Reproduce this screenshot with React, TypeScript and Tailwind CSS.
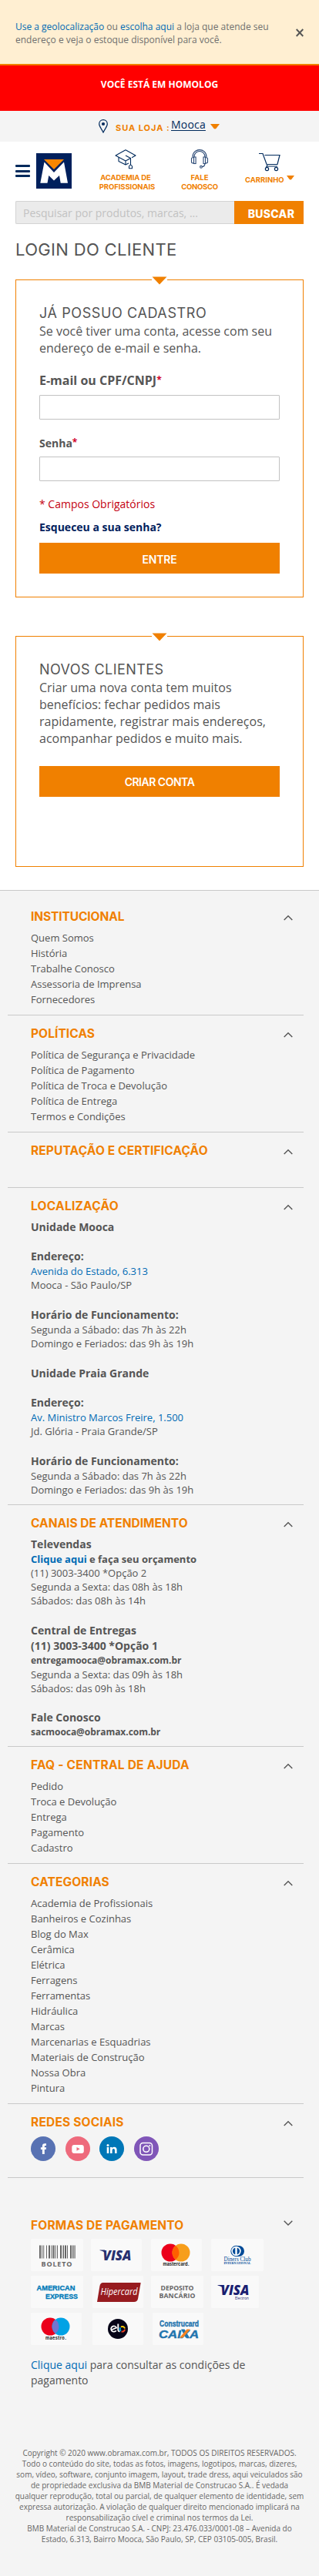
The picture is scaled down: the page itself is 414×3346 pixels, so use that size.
import type { ReactNode } from "react";

const BRAND = "font-['Inter',sans-serif]";

function Caret({ className = "" }: { className?: string }) {
  return (
    <svg className={className} viewBox="0 0 12 7" preserveAspectRatio="none">
      <path d="M0 0H12L8 5.2Q6 7.6 4 5.2Z" fill="#f08000" />
    </svg>
  );
}

function Chevron({ down = false }: { down?: boolean }) {
  return (
    <svg className="block" width="12" height="8" viewBox="0 0 12 8" fill="none" stroke="#555" strokeWidth="1.4">
      <path d={down ? "M0.7 0.8L6 6L11.3 0.8" : "M0.7 7L6 1.8L11.3 7"} />
    </svg>
  );
}

function Card({ children, className }: { children: ReactNode; className: string }) {
  return (
    <section className={`relative mx-5 border border-[#f08000] px-[30px] ${className}`}>
      <span className="absolute -top-[5px] left-[176px] flex h-[11px] w-5 justify-center bg-white">
        <svg width="20" height="11" viewBox="0 0 20 11">
          <path d="M0.5 0.5H19.5L10 10.5Z" fill="#f08000" />
        </svg>
      </span>
      {children}
    </section>
  );
}

function Title({ tracking, children }: { tracking: string; children: ReactNode }) {
  return <h3 className={`${BRAND} text-[15.5px] font-bold leading-[29px] whitespace-nowrap text-[#f08000] ${tracking}`}>{children}</h3>;
}

function Section({ title, tracking, first, children, className = "" }: {
  title: string; tracking: string; first?: boolean; children?: ReactNode; className?: string;
}) {
  return (
    <section className={`ml-[10px] mr-5 border-b border-[#c9c9c9] pl-[30px] pr-[14px] ${first ? "pt-[19px]" : "pt-[9px]"} ${className}`}>
      <header className="flex h-[30px] items-start justify-between">
        <Title tracking={tracking}>{title}</Title>
        <span className="mt-3"><Chevron /></span>
      </header>
      {children}
    </section>
  );
}

function Links({ items }: { items: string[] }) {
  return (
    <ul className="pt-[2px] pb-[10px]">
      {items.map((t) => (
        <li key={t} className="h-5 text-[13px] leading-5">{t}</li>
      ))}
    </ul>
  );
}

const Strong = ({ children }: { children: ReactNode }) => (
  <p className="h-5 text-[14px] font-bold leading-5">{children}</p>
);
const Line = ({ children, className = "" }: { children: ReactNode; className?: string }) => (
  <p className={`h-[18px] text-[13px] leading-[18px] ${className}`}>{children}</p>
);
const Email = ({ children }: { children: ReactNode }) => (
  <p className="h-[18px] text-[12px] font-bold leading-[18px] tracking-[-0.04px]">{children}</p>
);

function Unit({ name, street, district }: { name: string; street: string; district: string }) {
  return (
    <div>
      <Strong>{name}</Strong>
      <div className="mt-[18px]">
        <Strong>Endereço:</Strong>
        <Line className="text-[#006bb4]">{street}</Line>
        <Line>{district}</Line>
      </div>
      <div className="mt-5">
        <Strong>Horário de Funcionamento:</Strong>
        <Line>Segunda a Sábado: das 7h às 22h</Line>
        <Line>Domingo e Feriados: das 9h às 19h</Line>
      </div>
    </div>
  );
}

function Tile({ className, children }: { className: string; children: ReactNode }) {
  return <div className={`flex h-[42px] shrink-0 items-center justify-center rounded-[2px] bg-[#f9f9f9] ${className}`}>{children}</div>;
}

function Visa({ electron = false }: { electron?: boolean }) {
  return (
    <svg width="62" height="42" viewBox="0 0 62 42" fontFamily="Open Sans, sans-serif">
      <text x="13.5" y="27.5" fontSize="18" fontWeight="800" fontStyle="italic" fill={electron ? "#1a1f71" : "#27306f"} textLength="37" lengthAdjust="spacingAndGlyphs" transform={electron ? "translate(-1 -2.5)" : "translate(0 0)"}>VISA</text>
      <path d={electron ? "M8.5 12H15L17 18Q14 13.5 8.5 12.6Z" : "M9.5 14.500H16L18 20.500Q15 16 9.500 15.100Z"} fill={electron ? "#1a1f71" : "#27306f"} />
      {electron && <text x="31" y="30.8" fontSize="5" fill="#1a1f71" textLength="18" lengthAdjust="spacingAndGlyphs">Electron</text>}
    </svg>
  );
}

function TwoCircles({ left, right, mid, label, cx = 25 }: { left: string; right: string; mid: string; label: string; cx?: number }) {
  return (
    <svg width="66" height="42" viewBox="0 0 66 42">
      <circle cx={cx} cy="18" r="11.5" fill={left} />
      <circle cx={cx + 14} cy="18" r="11.5" fill={right} />
      <path transform={`translate(${cx + 7} 0)`} d="M0 8.9A11.5 11.5 0 0 1 0 27.1A11.5 11.5 0 0 1 0 8.9Z" fill={mid} />
      <text x={cx + 7.5} y="34.8" textAnchor="middle" fontSize="5.6" fontWeight="700" fontFamily="Inter, sans-serif" fill="#1b1b1b" textLength={label === "maestro." ? 27 : 34}>{label}</text>
    </svg>
  );
}

const bars: [number, number][] = [[0, 2], [3, 1], [5.2, 1], [9, 1], [12, 2], [15.5, 1], [17.5, 2], [20.5, 1], [23, 1], [27, 2], [30.5, 1.5], [33, 2], [36, 1], [40, 2], [43, 1.5], [45.5, 1.2]];

function Payments() {
  return (
    <div className="flex flex-col gap-[6px] pt-[2px]">
      <div className="flex">
        <Tile className="w-[68px]">
          <svg width="68" height="42" viewBox="0 0 68 42">
            {bars.map(([x, w]) => <rect key={x} x={11 + x} y="8.5" width={w} height="17" fill="#666" />)}
            <text x="13.5" y="35.5" fontFamily="Open Sans, sans-serif" fontSize="9" fontWeight="700" fill="#666" textLength="40">BOLETO</text>
          </svg>
        </Tile>
        <Tile className="ml-[10px] w-[66px]"><Visa /></Tile>
        <Tile className="ml-3 w-[66px]"><TwoCircles left="#eb001b" right="#f79e1b" mid="#ff5f00" label="mastercard." /></Tile>
        <Tile className="ml-3 w-[68px]">
          <svg width="68" height="42" viewBox="0 0 68 42" fill="#004a97" fontFamily="Liberation Serif, serif">
            <path d="M32 9H36A7 7 0 0 1 36 23H32Z" />
            <circle cx="32.5" cy="16" r="7.2" />
            <circle cx="32.5" cy="16" r="6.2" fill="#fff" />
            <path d="M31.3 11.5A4.7 4.7 0 0 0 31.3 20.5ZM33.7 11.5A4.7 4.7 0 0 1 33.7 20.5Z" />
            <text x="16.5" y="28.7" fontSize="7.5" textLength="35" lengthAdjust="spacingAndGlyphs">Diners Club</text>
            <text x="16.5" y="33" fontSize="4" fontWeight="700" textLength="35" lengthAdjust="spacingAndGlyphs">INTERNATIONAL</text>
          </svg>
        </Tile>
      </div>
      <div className="flex">
        <Tile className="w-[68px]">
          <svg width="68" height="42" viewBox="0 0 68 42" fill="#0079b8" fontFamily="Liberation Sans, sans-serif" fontWeight="700" stroke="#0079b8" strokeWidth="0.3">
            <text x="7.5" y="19" fontSize="9" textLength="50" lengthAdjust="spacingAndGlyphs">AMERICAN</text>
            <text x="19" y="30" fontSize="9" textLength="42" lengthAdjust="spacingAndGlyphs">EXPRESS</text>
          </svg>
        </Tile>
        <Tile className="ml-3 w-[66px]">
          <svg width="66" height="42" viewBox="0 0 66 42">
            <path d="M13.5 9H62.7L59 30Q58 34 54 34H6L9.5 13Q10.5 9 13.5 9Z" fill="#971b1f" />
            <text x="10.5" y="25" fontFamily="Open Sans, sans-serif" fontStyle="italic" fontSize="12" fill="#fff" textLength="48" lengthAdjust="spacingAndGlyphs">Hipercard</text>
          </svg>
        </Tile>
        <Tile className="ml-[10px] w-[68px]">
          <svg width="68" height="42" viewBox="0 0 68 42" fill="#666" fontFamily="Open Sans, sans-serif" fontWeight="700" fontSize="8.7">
            <text x="12.5" y="18.5" textLength="43">DEPOSITO</text>
            <text x="10.5" y="29" textLength="47">BANCÁRIO</text>
          </svg>
        </Tile>
        <Tile className="ml-[10px] w-[62px]"><Visa electron /></Tile>
      </div>
      <div className="flex">
        <Tile className="w-[66px]"><TwoCircles left="#eb001b" right="#00a2e5" mid="#7375cf" label="maestro." /></Tile>
        <Tile className="ml-[14px] w-[66px]">
          <svg width="66" height="42" viewBox="0 0 66 42" fill="none">
            <circle cx="33" cy="21" r="13" fill="#060417" />
            <path d="M24.8 22.300L31.200 19.500A3.700 3.700 0 1 0 30.800 23.200" stroke="#fff" strokeWidth="1.700" />
            <path d="M33.300 14.500V22Q33.300 24.500 35.500 24.300" stroke="#fff" strokeWidth="1.900" />
            <path d="M36.300 19.200A3.400 3.400 0 0 0 37 23.800" stroke="#00a4e0" strokeWidth="1.900" />
            <path d="M36.900 18.500A3.400 3.400 0 0 1 42 20.500" stroke="#ffcb05" strokeWidth="1.900" />
            <path d="M42 21.600A3.400 3.400 0 0 1 37.600 24.500" stroke="#ef4123" strokeWidth="1.900" />
          </svg>
        </Tile>
        <Tile className="ml-3 w-[66px]">
          <svg width="66" height="42" viewBox="0 0 66 42" fill="#1f74ae" stroke="#1f74ae" strokeWidth="0.4" fontFamily="Liberation Sans, sans-serif" fontWeight="700">
            <text x="9" y="18" fontSize="11" textLength="51" lengthAdjust="spacingAndGlyphs">Construcard</text>
            <text x="8" y="32.5" fontSize="15" fontStyle="italic" textLength="52" lengthAdjust="spacingAndGlyphs">CAIXA</text>
            <path d="M37 21.5H41.5L48 32.5H43Z" fill="#1f74ae" stroke="none" />
            <path d="M49 21.5H44.5L35 32.5H39.5Z" fill="#f58220" stroke="none" />
          </svg>
        </Tile>
      </div>
    </div>
  );
}

function Social() {
  return (
    <div className="flex gap-[12.5px] pt-[3px] pb-[21px]">
      <svg width="32" height="32" viewBox="0 0 32 32"><circle cx="16" cy="16" r="16" fill="#5872b3" /><path d="M14.9 23V16.9H12.9V14.3H14.9V12.7Q14.9 9.3 18.2 9.3H20V12H18.8Q17.8 12 17.8 13V14.3H20L19.7 16.9H17.8V23Z" fill="#fff" /></svg>
      <svg width="32" height="32" viewBox="0 0 32 32"><circle cx="16" cy="16" r="16" fill="#ee6a7c" /><rect x="8.3" y="11" width="15.5" height="11" rx="3" fill="#fff" /><path d="M14.5 14L18.7 16.3L14.5 18.7Z" fill="#ee6a7c" /></svg>
      <svg width="32" height="32" viewBox="0 0 32 32"><circle cx="16" cy="16" r="16" fill="#0077b7" /><path d="M9.7 14H12.3V22H9.7ZM14 14H16.5V15.2Q17.4 13.8 19.3 13.8Q22.6 13.8 22.6 17.6V22H20V18Q20 16.1 18.4 16.1Q16.6 16.1 16.6 18.2V22H14Z" fill="#fff" /><circle cx="11" cy="11.500" r="1.500" fill="#fff" /></svg>
      <svg width="32" height="32" viewBox="0 0 32 32"><circle cx="16" cy="16" r="16" fill="#8056b8" /><rect x="8" y="8.5" width="15.5" height="15.5" rx="3.5" fill="none" stroke="#fff" strokeWidth="1.5" /><circle cx="15.800" cy="16.300" r="4" fill="none" stroke="#fff" strokeWidth="1.600" /><circle cx="20.300" cy="11.900" r="1" fill="#fff" /></svg>
    </div>
  );
}

export default function App() {
  return (
    <div className="w-full bg-white font-['Open_Sans',sans-serif] text-[#555]">
      <div className="flex h-[85px] items-start border-b-2 border-[#f08000] bg-[#ffefd2] pl-5 pt-[26px] text-[#6f6f6f]">
        <p className="w-[350px] text-[12px] leading-[17px]">
          <span className="text-[#006bb4]">Use a geolocalização</span> ou <span className="text-[#006bb4]">escolha aqui</span> a loja que atende seu<br />endereço e veja o estoque disponível para você.
        </p>
        <svg className="ml-[14px] mt-[11px]" width="10" height="11" viewBox="0 0 10 11" fill="none" stroke="#555" strokeWidth="1.9"><path d="M0.7 1L9.3 10M9.3 1L0.7 10" /></svg>
      </div>
      <div className="h-[59px] bg-[#ff0000] pt-[16px] text-center text-[12px] font-bold leading-[17px] text-white">VOCÊ ESTÁ EM HOMOLOG</div>

      <div className="flex h-10 bg-[#f4f4f4] pl-[128px]">
        <svg className="mt-[11px]" width="12" height="18" viewBox="0 0 12 18"><path d="M6 0.7C3 0.7 0.7 3 0.7 6C0.7 9 3.2 11.5 6 17C8.8 11.5 11.3 9 11.3 6C11.3 3 9 0.7 6 0.7Z" fill="none" stroke="#002a5c" strokeWidth="1.2" /><circle cx="6" cy="6" r="2.1" fill="#002a5c" /></svg>
        <span className={`${BRAND} ml-[10px] mt-[12px] w-[72px] text-[11px] font-bold leading-5 tracking-[0.97px] whitespace-nowrap text-[#f08000]`}>SUA LOJA :</span>
        <span className="mt-[8px] text-[14px] leading-5 tracking-[0.2px] text-[#002a5c] underline underline-offset-2">Mooca</span>
        <Caret className="ml-[6px] mt-[17px] h-[7px] w-3" />
      </div>

      <div className="flex h-[77px] pl-5">
        <div className="mt-[30px] flex h-[16px] w-[19px] flex-col justify-between">
          <i className="h-[3px] rounded-[1px] bg-[#002a5c]" /><i className="h-[3px] rounded-[1px] bg-[#002a5c]" /><i className="h-[3px] rounded-[1px] bg-[#002a5c]" />
        </div>
        <svg className="ml-2 mt-[15px]" width="46" height="46" viewBox="0 0 46 46"><rect width="46" height="46" fill="#00205c" /><path d="M10 8H36L23 21Z" fill="#f98600" /><path d="M10.500 11.500L23 25L36 11.500L41 38.700H31.700L30 29L23 35.500L16.300 29L14.500 38.700H5.300Z" fill="#fff" /></svg>
        <div className={`${BRAND} ml-[34px] mt-[9px] flex w-[76px] flex-col items-center text-[9.5px] font-bold leading-3 text-[#f08000]`}>
          <svg className="ml-[-4px]" width="28" height="28" viewBox="0 0 28 28" fill="none" stroke="#002a5c" strokeWidth="1.1" strokeLinejoin="round"><path d="M14 16L1 9L14 1.800L27 9L22 11.800M14 9L20.500 12.500V21M14 16L20.500 12.500M5 11.500V16.500L14 21L18 19M14 16V21M18.500 25.800V23Q20.500 19.500 22.500 23V25.800Z" /></svg>
          <p className="mt-[4px] text-center whitespace-nowrap"><span className="mr-[4px] tracking-[-0.1px]">ACADEMIA DE</span><br /><span className="tracking-[-0.09px]">PROFISSIONAIS</span></p>
        </div>
        <div className={`${BRAND} ml-[31px] mt-[9px] flex w-[50px] flex-col items-center text-[9.5px] font-bold leading-3 text-[#f08000]`}>
          <svg width="24" height="28" viewBox="0 0 24 28" fill="none" stroke="#2d4b77" strokeWidth="1.1"><path d="M3 11C3 -1.5 21 -1.5 21 11M5 11C5 1 19 1 19 11" /><rect x="4.5" y="11" width="2.6" height="8.500" /><rect x="17" y="11" width="2.6" height="8.500" /><path d="M4.500 11.500Q1.500 11.500 1.500 13V17.500Q1.500 19 4.500 19M19.500 11.500Q22.500 11.500 22.500 13V17.500Q22.500 19 19.500 19M19 20Q18 24 15 23.500" /><circle cx="14" cy="23.800" r="1.400" /></svg>
          <p className="mt-[4px] text-center whitespace-nowrap">FALE<br /><span className="tracking-[-0.3px]">CONOSCO</span></p>
        </div>
        <div className={`${BRAND} ml-[34px] mt-[14px] w-[66px] text-[9.5px] font-bold leading-3 text-[#f08000]`}>
          <svg className="ml-[17px]" width="30" height="26" viewBox="0 0 30 26" fill="none" stroke="#002a5c" strokeWidth="1.2"><path d="M1 1.5H6L12 18H25M8.5 3.5H28L25 15.5H12M12 18Q10.5 18 10.5 19" /><circle cx="11.5" cy="21.5" r="2.1" /><circle cx="23.5" cy="21.5" r="2.1" /></svg>
          <p className="mt-[4px] flex items-start"><span className="w-[54px]">CARRINHO</span><Caret className="h-[6px] w-[10px]" /></p>
        </div>
      </div>

      <div className="mx-5 flex h-[30px]">
        <div className="w-[284px] rounded-l-[2px] border border-r-0 border-[#d3d3d3] bg-[#ebebeb] pl-[9px] pt-[2px] text-[14px] leading-[26px] text-[#c2c2c2]">Pesquisar por produtos, marcas, ...</div>
        <button className={`${BRAND} w-[90px] bg-[#f08000] pl-[6px] pt-[3px] text-[14px] font-extrabold tracking-[0.3px] text-white`}>BUSCAR</button>
      </div>

      <h1 className={`${BRAND} ml-5 mt-[18px] h-[54px] text-[22px] font-normal leading-[31px] tracking-[0.33px]`}>LOGIN DO CLIENTE</h1>

      <Card className="h-[413px] pt-[28px]">
        <h2 className={`${BRAND} h-[27px] text-[18px] font-normal leading-[29px] tracking-[0.6px]`}>JÁ POSSUO CADASTRO</h2>
        <p className="text-[16px] leading-[22px]">Se você tiver uma conta, acesse com seu endereço de e-mail e senha.</p>
        <label className="mt-[20px] flex h-[22px] items-center text-[16px] font-bold">E-mail ou CPF/CNPJ<span className="text-[12px] text-[#d10029]">*</span></label>
        <div className="mt-[8px] h-8 rounded-[1px] border border-[#c2c2c2] bg-white" />
        <label className="mt-[20px] flex h-5 items-center text-[14px] font-bold">Senha<span className="text-[12px] text-[#d10029]">*</span></label>
        <div className="mt-[8px] h-8 rounded-[1px] border border-[#c2c2c2] bg-white" />
        <p className="mt-[20px] text-[14px] leading-5 text-[#c40010]">* Campos Obrigatórios</p>
        <p className="mt-[10px] text-[14px] font-bold leading-5 text-[#00205c]">Esqueceu a sua senha?</p>
        <button className={`${BRAND} mt-[10px] block h-10 w-full bg-[#f08000] pt-[2px] text-[14px] font-semibold tracking-[-0.2px] text-white`}>ENTRE</button>
      </Card>

      <Card className="mt-[50px] h-[300px] pt-[28px]">
        <h2 className={`${BRAND} h-[27px] text-[18px] font-normal leading-[29px] tracking-[0.43px]`}>NOVOS CLIENTES</h2>
        <p className="text-[16px] leading-[22px]">Criar uma nova conta tem muitos benefícios: fechar pedidos mais rapidamente, registrar mais endereços, acompanhar pedidos e muito mais.</p>
        <button className={`${BRAND} mt-[25px] block h-10 w-full bg-[#f08000] text-[14px] font-semibold tracking-[-0.49px] text-white`}>CRIAR CONTA</button>
      </Card>

      <footer className="mt-[30px] h-[2190px] border-t border-[#c9c9c9] bg-[#f4f4f4]">
        <Section title="INSTITUCIONAL" tracking="tracking-[-0.1px]" first>
          <Links items={["Quem Somos", "História", "Trabalhe Conosco", "Assessoria de Imprensa", "Fornecedores"]} />
        </Section>
        <Section title="POLÍTICAS" tracking="tracking-[0.08px]">
          <Links items={["Política de Segurança e Privacidade", "Política de Pagamento", "Política de Troca e Devolução", "Política de Entrega", "Termos e Condições"]} />
        </Section>
        <Section title="REPUTAÇÃO E CERTIFICAÇÃO" tracking="tracking-[0.13px]" className="h-[72px]" />
        <Section title="LOCALIZAÇÃO" tracking="tracking-[0.25px]">
          <div className="flex flex-col gap-5 pt-[2px] pb-[10px]">
            <Unit name="Unidade Mooca" street="Avenida do Estado, 6.313" district="Mooca - São Paulo/SP" />
            <Unit name="Unidade Praia Grande" street="Av. Ministro Marcos Freire, 1.500" district="Jd. Glória - Praia Grande/SP" />
          </div>
        </Section>
        <Section title="CANAIS DE ATENDIMENTO" tracking="tracking-[0.02px]">
          <div className="pt-[2px] pb-[9px]">
            <Strong>Televendas</Strong>
            <p className="h-[18px] text-[13px] font-bold leading-[18px]"><span className="text-[#006bb4]">Clique aqui</span> e faça seu orçamento</p>
            <Line>(11) 3003-3400 *Opção 2</Line>
            <Line>Segunda a Sexta: das 08h às 18h</Line>
            <Line>Sábados: das 08h às 14h</Line>
            <div className="mt-5">
              <Strong>Central de Entregas</Strong>
              <Strong>(11) 3003-3400 *Opção 1</Strong>
              <Email>entregamooca@obramax.com.br</Email>
              <Line>Segunda a Sexta: das 09h às 18h</Line>
              <Line>Sábados: das 09h às 18h</Line>
            </div>
            <div className="mt-[19px]">
              <Strong>Fale Conosco</Strong>
              <Email>sacmooca@obramax.com.br</Email>
            </div>
          </div>
        </Section>
        <Section title="FAQ - CENTRAL DE AJUDA" tracking="tracking-[0.23px]">
          <Links items={["Pedido", "Troca e Devolução", "Entrega", "Pagamento", "Cadastro"]} />
        </Section>
        <Section title="CATEGORIAS" tracking="tracking-[0.13px]">
          <Links items={["Academia de Profissionais", "Banheiros e Cozinhas", "Blog do Max", "Cerâmica", "Elétrica", "Ferragens", "Ferramentas", "Hidráulica", "Marcas", "Marcenarias e Esquadrias", "Materiais de Construção", "Nossa Obra", "Pintura"]} />
        </Section>
        <Section title="REDES SOCIAIS" tracking="tracking-[0.2px]">
          <Social />
        </Section>

        <section className="pl-10 pr-[34px] pt-[47px]">
          <header className="flex h-[30px] items-start justify-between">
            <Title tracking="tracking-[0.18px]">FORMAS DE PAGAMENTO</Title>
            <span className="mt-[8px]"><Chevron down /></span>
          </header>
          <Payments />
          <p className="mt-4 w-[300px] text-[14px] leading-5"><span className="text-[#006bb4]">Clique aqui</span> para consultar as condições de pagamento</p>
        </section>

        <div className="mt-[77px] text-center text-[10px] leading-[14px] whitespace-nowrap text-[#666]">
          <p>Copyright © 2020 www.obramax.com.br, TODOS OS DIREITOS RESERVADOS.<br />Todo o conteúdo do site, todas as fotos, imagens, logotipos, marcas, dizeres,<br />som, vídeo, software, conjunto imagem, layout, trade dress, aqui veiculados são<br />de propriedade exclusiva da BMB Material de Construcao S.A.. É vedada<br />qualquer reprodução, total ou parcial, de qualquer elemento de identidade, sem<br />expressa autorização. A violação de qualquer direito mencionado implicará na<br />responsabilização cível e criminal nos termos da Lei.</p>
          <p>BMB Material de Construcao S.A. - CNPJ: 23.476.033/0001-08 – Avenida do<br />Estado, 6.313, Bairro Mooca, São Paulo, SP, CEP 03105-005, Brasil.</p>
        </div>
      </footer>
    </div>
  );
}
